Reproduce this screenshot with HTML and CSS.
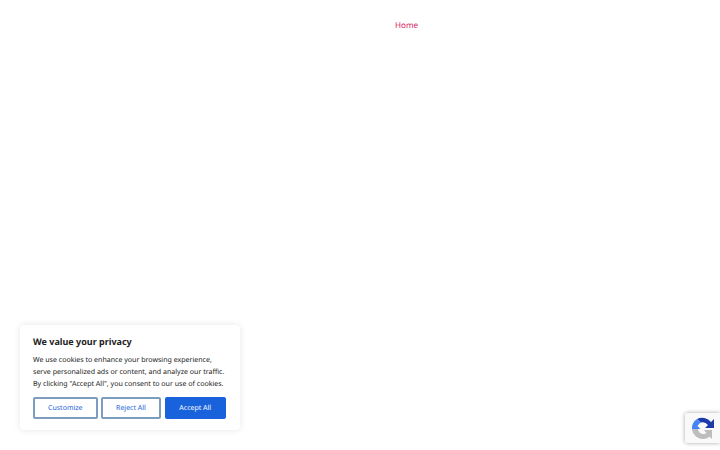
FILE: index.html
```html
<!DOCTYPE html>
<html lang="en">
<head>
<meta charset="utf-8">
<title>Home</title>
<link rel="stylesheet" href="styles.css">
</head>
<body>
<nav class="nav"><a class="nav-link" href="#">Home</a></nav>
<section class="consent">
  <p class="consent-title">We value your privacy</p>
  <p class="consent-text">We use cookies to enhance your browsing experience, serve personalized ads or content, and analyze our traffic. By clicking "Accept All", you consent to our use of cookies.</p>
  <div class="consent-actions">
    <button class="btn btn-customize">Customize</button>
    <button class="btn btn-reject">Reject All</button>
    <button class="btn btn-accept">Accept All</button>
  </div>
</section>
<div class="recaptcha">
  <svg class="recaptcha-logo" viewBox="0 0 24 24" width="24" height="24" aria-hidden="true">
    <path fill="#1c3aa9" d="M6 2A11 11 0 0 1 20 5L23 2V11H14L17 8A7 7 0 0 0 10 5.500Z"/>
    <path fill="#4285f4" d="M1 12A11 11 0 0 1 6 2L10 5.500A6.500 6.500 0 0 0 6.500 9L9.500 12Z"/>
    <path fill="#bdbdbd" d="M1 12H7A5.500 5.500 0 0 0 15.500 16.200L13 13H21V22L18.500 19.700A11 11 0 0 1 1 12Z"/>
  </svg>
</div>
</body>
</html>
```
FILE: styles.css
```css
html, body {
  margin: 0;
  padding: 0;
  height: 100%;
  background: #fff;
  font-family: "Noto Sans", sans-serif;
  text-rendering: geometricPrecision;
  overflow: hidden;
}
.nav {
  display: flex;
  padding: 19.500px 0 0 395px;
}
.nav-link {
  font-size: 8.100px;
  line-height: 12px;
  color: #d81b60;
  text-decoration: none;
}
.consent {
  position: absolute;
  left: 20px;
  top: 325px;
  width: 220px;
  height: 105px;
  box-sizing: border-box;
  padding: 11px 13px 0;
  background: #fff;
  border-radius: 4px;
  box-shadow: 0 0 7px rgba(0, 0, 0, 0.1);
}
.consent-title {
  margin: 0;
  font-size: 9px;
  font-weight: 700;
  line-height: 12px;
  color: #212121;
}
.consent-text {
  margin: 6px 0 0;
  font-size: 7.050px;
  line-height: 12px;
  color: #212121;
  width: 194px;
}
.consent-actions {
  display: flex;
  gap: 3.500px;
  margin-top: 7px;
}
.btn {
  box-sizing: border-box;
  height: 22px;
  padding: 0 0 0;
  border: 2px solid #7d9dbf;
  border-radius: 2px;
  background: #fff;
  color: #1863dc;
  font-family: inherit;
  font-size: 7px;
  line-height: 20px;
  text-rendering: geometricPrecision;
}
.btn-customize { width: 64.500px; }
.btn-reject { width: 60px; }
.btn-accept {
  width: 61.500px;
  background: #1863dc;
  border-color: #1863dc;
  color: #fff;
}
.recaptcha {
  position: absolute;
  right: 0;
  top: 413px;
  width: 35px;
  height: 30px;
  box-sizing: border-box;
  padding: 4px 0 0 6px;
  background: #f9f9f9;
  border-radius: 2px 0 0 2px;
  box-shadow: 0 0 4px rgba(0, 0, 0, 0.35);
  overflow: hidden;
}
.recaptcha-logo {
  display: block;
}
```
